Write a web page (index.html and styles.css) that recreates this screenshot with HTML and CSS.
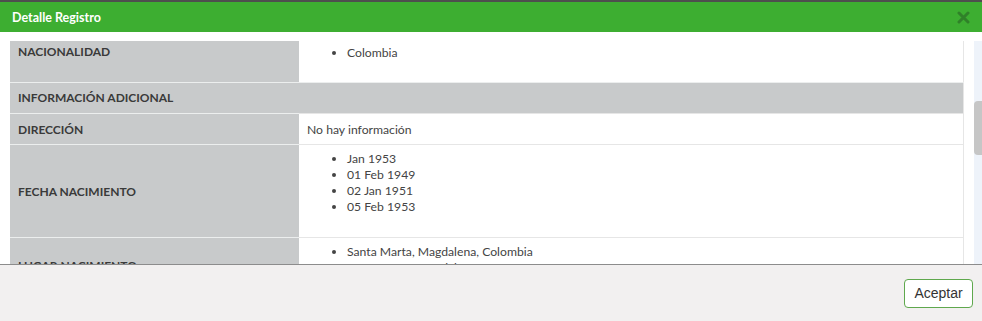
FILE: index.html
```html
<!DOCTYPE html>
<html lang="es">
<head>
<meta charset="utf-8">
<title>Detalle Registro</title>
<link rel="stylesheet" href="styles.css">
</head>
<body>
<div class="modal">
  <div class="modal-header">
    <span class="modal-title">Detalle Registro</span>
    <span class="close" aria-label="Cerrar">
      <svg width="13" height="13" viewBox="0 0 13 13"><path d="M2 2 L11 11 M11 2 L2 11" stroke="#2b6f27" stroke-width="3" stroke-linecap="round" fill="none"/></svg>
    </span>
  </div>
  <div class="modal-body">
    <div class="scroll-area">
      <table class="detail">
        <tr class="top">
          <th>NACIONALIDAD</th>
          <td><ul><li>Colombia</li></ul></td>
        </tr>
        <tr class="section">
          <th colspan="2">INFORMACIÓN ADICIONAL</th>
        </tr>
        <tr>
          <th>DIRECCIÓN</th>
          <td class="plain">No hay información</td>
        </tr>
        <tr>
          <th>FECHA NACIMIENTO</th>
          <td><ul><li>Jan 1953</li><li>01 Feb 1949</li><li>02 Jan 1951</li><li>05 Feb 1953</li></ul></td>
        </tr>
        <tr class="place">
          <th>LUGAR NACIMIENTO</th>
          <td><ul><li>Santa Marta, Magdalena, Colombia</li><li>Santa Marta, Magdalena</li></ul></td>
        </tr>
      </table>
    </div>
    <div class="scrollbar"><div class="thumb"></div></div>
  </div>
  <div class="modal-footer">
    <button class="btn">Aceptar</button>
  </div>
</div>
</body>
</html>
```

FILE: styles.css
```css
* { box-sizing: border-box; }
html, body { margin: 0; padding: 0; background: #fff; }
body { font-family: "Lato", "Open Sans", sans-serif; color: #3a3a3a; }

.modal {
  width: 982px;
  height: 321px;
  display: flex;
  flex-direction: column;
  overflow: hidden;
}

.modal-header {
  height: 32px;
  flex: none;
  border-top: 2px solid #4e4e4e;
  background: #3dae31;
  display: flex;
  align-items: center;
  justify-content: space-between;
  padding: 0 12px 0 12px;
}
.modal-title {
  color: #fff;
  font-weight: 700;
  font-size: 12.5px;
}
.close { display: flex; opacity: 0.7; }

.modal-body {
  flex: 1;
  min-height: 0;
  display: flex;
  overflow: hidden;
  background: #fff;
}
.scroll-area {
  flex: 1;
  min-width: 0;
  padding: 9px 10px 0 10px;
  overflow: hidden;
}
.scrollbar {
  width: 8px;
  flex: none;
  background: #eef3fa;
  margin-top: 9px;
  padding-top: 60px;
}
.thumb {
  width: 8px;
  height: 54px;
  background: #c6c6c6;
  border-radius: 4px 0 0 4px;
}

.detail {
  width: 100%;
  border-collapse: collapse;
  border-right: 1px solid #e6e6e6;
  font-size: 12.2px;
  color: #444;
}
.detail th {
  width: 289px;
  background: #c8cacb;
  text-align: left;
  font-weight: 700;
  font-size: 12px;
  padding: 6px 8px;
  vertical-align: middle;
  border-top: 1px solid #eceeee;
  color: #3a3a3a;
}
.detail tr.top th { vertical-align: top; padding-top: 3px; border-top: 0; }
.detail tr.top td { border-top: 0; padding-top: 4px; padding-bottom: 5px; }
.detail tr.section th { height: 31px; padding-top: 5px; }
.detail tr.place th { padding-bottom: 12px; }
.detail td {
  padding: 6px 8px 6px;
  border-top: 1px solid #e6e6e6;
  vertical-align: top;
}
.detail td.plain { height: 31px; vertical-align: middle; padding: 5px 8px; }
.detail ul {
  margin: 0 0 16px 0;
  padding-left: 40px;
  line-height: 16px;
}
.detail li::marker { font-size: 12px; }

.modal-footer {
  height: 57px;
  flex: none;
  border-top: 1px solid #8c8c8c;
  background: #f2f0f0;
  display: flex;
  align-items: center;
  justify-content: flex-end;
  padding: 0 9px 0 0;
}
.btn {
  height: 29px;
  width: 69px;
  padding: 0;
  font-family: "Liberation Sans", Arial, sans-serif;
  font-size: 14px;
  color: #333;
  background: #fff;
  border: 1px solid #5fa84d;
  border-radius: 4px;
}
```
